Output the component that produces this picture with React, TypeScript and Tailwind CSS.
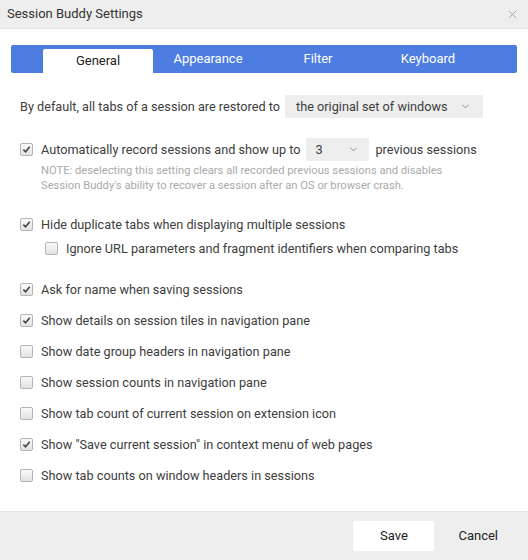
import { ChevronDown, X } from 'lucide-react';

const tabs = ['General', 'Appearance', 'Filter', 'Keyboard'];

const options = [
  { label: 'Ask for name when saving sessions', checked: true },
  { label: 'Show details on session tiles in navigation pane', checked: true },
  { label: 'Show date group headers in navigation pane', checked: false },
  { label: 'Show session counts in navigation pane', checked: false },
  { label: 'Show tab count of current session on extension icon', checked: false },
  { label: 'Show "Save current session" in context menu of web pages', checked: true },
  { label: 'Show tab counts on window headers in sessions', checked: false },
];

function Checkbox({ checked }: { checked: boolean }) {
  return (
    <span className="flex h-[13px] w-[13px] shrink-0 items-center justify-center rounded-[2px] border border-[#b4b4b4] bg-gradient-to-b from-[#fafafa] to-[#e2e2e2]">
      {checked && (
        <svg viewBox="0 0 10 10" className="h-[9px] w-[9px]">
          <path d="M1.5 5.2 L4 7.6 L8.6 2" fill="none" stroke="#444" strokeWidth="1.8" />
        </svg>
      )}
    </span>
  );
}

function Row({ label, checked }: { label: string; checked: boolean }) {
  return (
    <div className="flex h-[31px] items-center gap-[8px]">
      <Checkbox checked={checked} />
      <span>{label}</span>
    </div>
  );
}

export default function App() {
  return (
    <div className="flex h-[560px] w-[528px] flex-col bg-white font-['Roboto',sans-serif] text-[12.7px] text-[#3d3d3d]">
      <div className="flex h-[29px] items-center justify-between border-b border-[#e2e2e2] bg-[#eeeeee] pl-[7px] pr-[9px]">
        <span className="text-[13px] text-[#333]">Session Buddy Settings</span>
        <X size={13} strokeWidth={1.5} className="text-[#999]" />
      </div>

      <div className="flex-1 px-[11px] pt-[16px]">
        <div className="flex h-[28px] items-end rounded-[2px] bg-[#4d7de1] pl-[32px]">
          {tabs.map((t, i) =>
            i === 0 ? (
              <div key={t} className="flex h-[24px] w-[110px] items-center justify-center rounded-t-[2px] bg-white text-[13px] text-[#222]">
                {t}
              </div>
            ) : (
              <div key={t} className="flex h-[26px] w-[110px] items-center justify-center pb-[2px] text-[13px] text-white">
                {t}
              </div>
            )
          )}
        </div>

        <div className="px-[9px]">
          <div className="mt-[22px] flex items-center">
            <span>By default, all tabs of a session are restored to</span>
            <div className="ml-[5px] flex h-[23px] w-[198px] items-center justify-between bg-[#eeeeee] pl-[11px] pr-[12px]">
              <span>the original set of windows</span>
              <ChevronDown size={11} strokeWidth={1.5} className="text-[#666]" />
            </div>
          </div>

          <div className="mt-[20px] flex items-center gap-[8px]">
            <Checkbox checked />
            <span>Automatically record sessions and show up to</span>
            <div className="-ml-[2px] flex h-[23px] w-[63px] items-center justify-between bg-[#eeeeee] pl-[9px] pr-[10px]">
              <span>3</span>
              <ChevronDown size={11} strokeWidth={1.5} className="text-[#666]" />
            </div>
            <span className="-ml-[2px]">previous sessions</span>
          </div>
          <div className="ml-[21px] mt-[2px] text-[11.2px] leading-[15px] text-[#aaa]">
            NOTE: deselecting this setting clears all recorded previous sessions and disables
            <br />
            Session Buddy's ability to recover a session after an OS or browser crash.
          </div>

          <div className="mt-[22px] flex items-center gap-[8px]">
            <Checkbox checked />
            <span>Hide duplicate tabs when displaying multiple sessions</span>
          </div>
          <div className="ml-[25px] mt-[5px] flex items-center gap-[8px]">
            <Checkbox checked={false} />
            <span>Ignore URL parameters and fragment identifiers when comparing tabs</span>
          </div>

          <div className="mt-[16px]">
            {options.map((o) => (
              <Row key={o.label} label={o.label} checked={o.checked} />
            ))}
          </div>
        </div>
      </div>

      <div className="flex h-[49px] items-center justify-end border-t border-[#e6e6e6] bg-[#eeeeee] pr-[30px]">
        <button className="h-[30px] w-[81px] rounded-[2px] bg-white text-[13px] text-[#222]">Save</button>
        <button className="ml-[24px] h-[30px] text-[13px] text-[#222]">Cancel</button>
      </div>
    </div>
  );
}
